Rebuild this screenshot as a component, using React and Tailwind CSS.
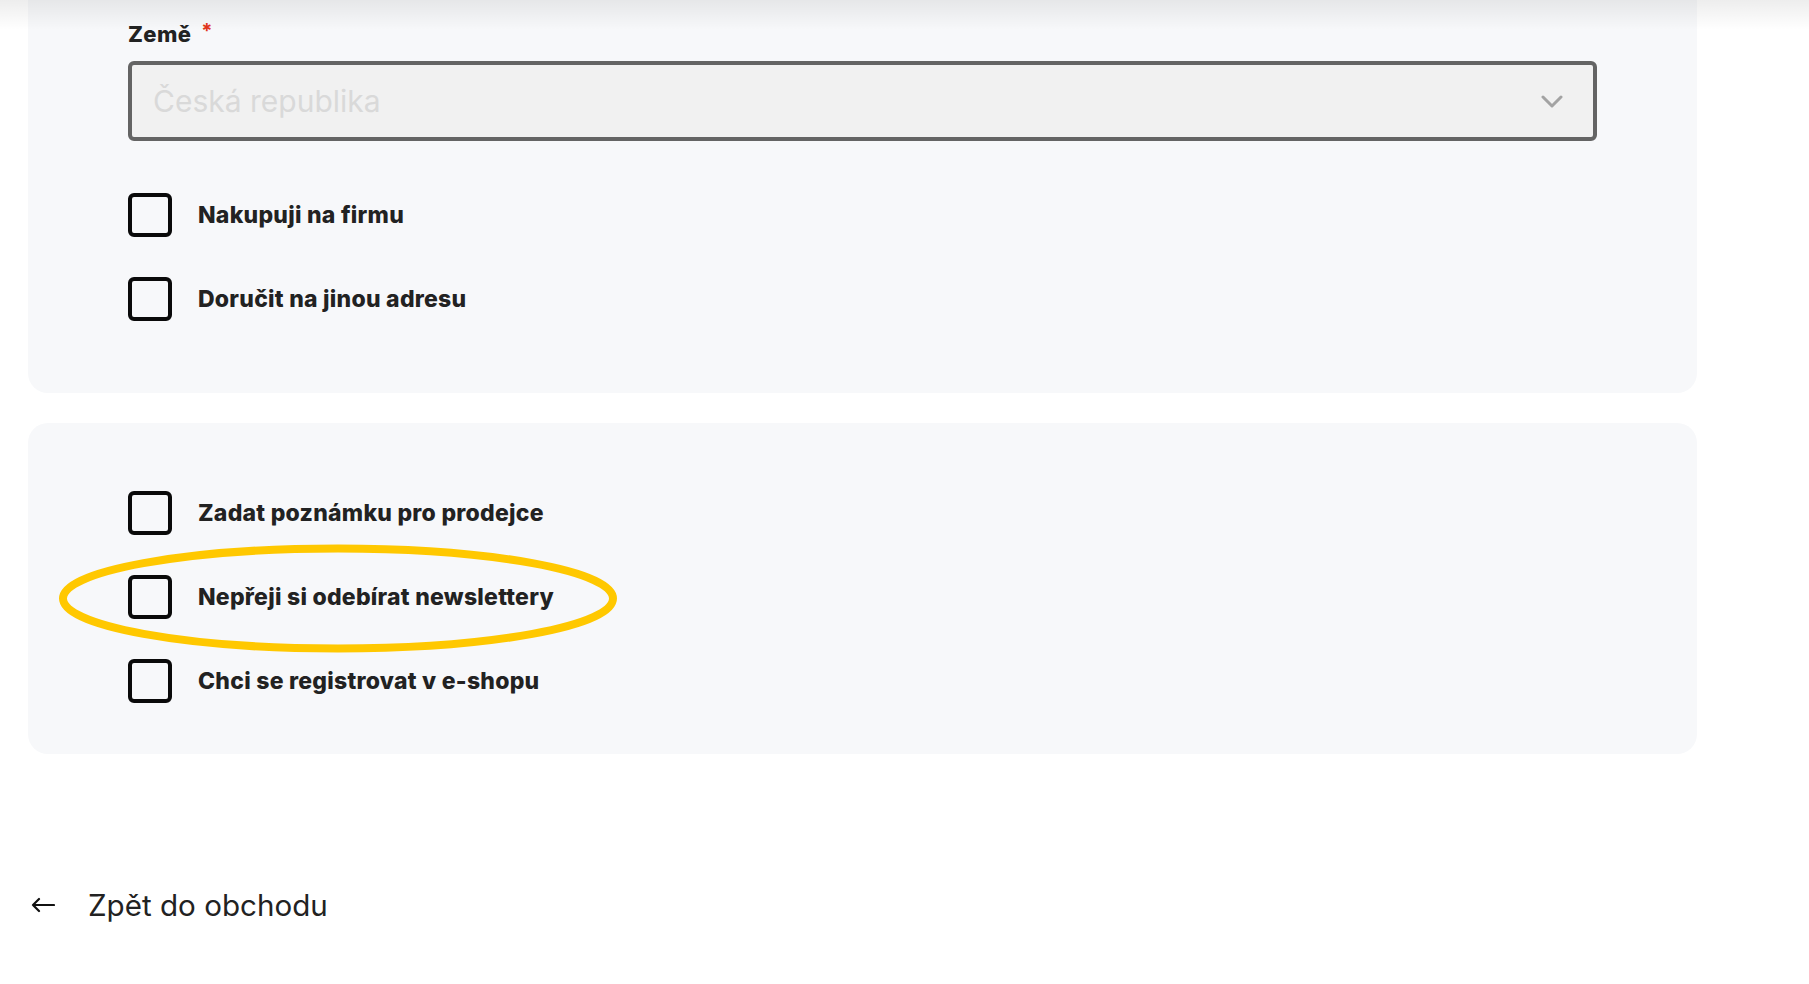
import React from 'react'

const font = "font-['Inter','Noto_Sans',sans-serif]"

function CheckRow({ label }) {
  return (
    <label className="flex h-[44px] items-center gap-[26px] cursor-pointer">
      <span className="block h-[44px] w-[44px] shrink-0 rounded-[6px] border-4 border-[#0a0a0a]" />
      <span className="text-[23px] font-extrabold leading-[30px] tracking-[0.25px] text-[#222]">{label}</span>
    </label>
  )
}

export default function App() {
  return (
    <div className={`relative min-h-screen bg-white text-[#222] ${font}`}>
      {/* header shadow */}
      <div className="pointer-events-none absolute inset-x-0 top-0 h-[30px] bg-gradient-to-b from-black/[0.07] to-transparent" />

      <div className="pl-[28px] pr-[112px]">
        {/* Address panel */}
        <section className="rounded-b-[20px] bg-[#f7f8fa] px-[100px] pt-[19px] pb-[72px]">
          <div className="flex items-start text-[22px] font-extrabold leading-[30px] tracking-[0.4px]">
            Země
            <span className="ml-[10px] text-[20px] font-bold leading-[24px] text-[#e2351b]">*</span>
          </div>
          <div className="mt-3 flex h-[80px] items-center justify-between rounded-[6px] border-4 border-[#646464] bg-[#f1f1f1] pl-[21px] pr-[30px]">
            <span className="text-[30px] leading-[36px] text-[#d9d9d9]">Česká republika</span>
            <svg width="22" height="13" viewBox="0 0 22 13" fill="none" className="text-[#a3a3a3]">
              <path d="M2 2l9 9 9-9" stroke="currentColor" strokeWidth="3" strokeLinecap="round" strokeLinejoin="round" />
            </svg>
          </div>

          <div className="mt-[52px] flex flex-col gap-[40px]">
            <CheckRow label="Nakupuji na firmu" />
            <CheckRow label="Doručit na jinou adresu" />
          </div>
        </section>

        {/* Options panel */}
        <section className="relative mt-[30px] rounded-[20px] bg-[#f7f8fa] px-[100px] pt-[68px] pb-[51px]">
          <div className="flex flex-col gap-[40px]">
            <CheckRow label="Zadat poznámku pro prodejce" />
            <CheckRow label="Nepřeji si odebírat newslettery" />
            <CheckRow label="Chci se registrovat v e-shopu" />
          </div>
          {/* highlight ring */}
          <svg className="pointer-events-none absolute left-[30px] top-[121px]" width="560" height="109" viewBox="0 0 560 109" fill="none">
            <ellipse cx="280" cy="54.5" rx="275" ry="50" stroke="#ffc800" strokeWidth="8" />
          </svg>
        </section>

        {/* Back link */}
        <a href="#" className="mt-[133px] flex h-[36px] items-center">
          <svg width="24" height="16" viewBox="0 0 24 16" fill="none" className="ml-[3px] text-[#111]">
            <path d="M23 8H2M8 2L2 8l6 6" stroke="currentColor" strokeWidth="2.2" strokeLinecap="round" strokeLinejoin="round" />
          </svg>
          <span className="ml-[33px] text-[29.6px] leading-[36px] text-[#222]">Zpět do obchodu</span>
        </a>
      </div>
    </div>
  )
}
